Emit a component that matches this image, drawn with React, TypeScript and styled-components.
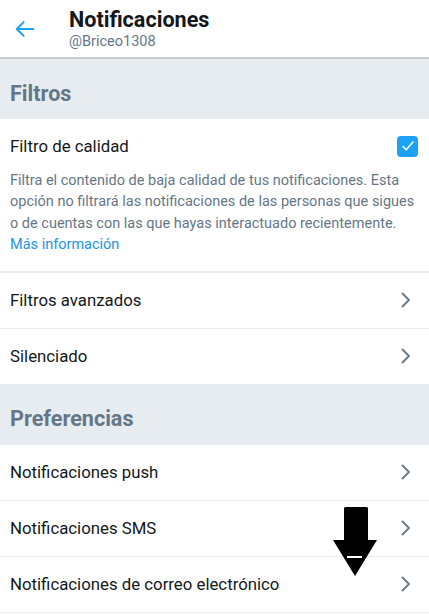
import React from "react";
import styled, { createGlobalStyle } from "styled-components";

const GlobalStyle = createGlobalStyle`
  html, body {
    margin: 0;
    padding: 0;
    background: #ffffff;
  }
  body {
    font-family: Roboto, "Noto Sans", "Liberation Sans", sans-serif;
    color: #14171a;
  }
`;

const filterRows = ["Filtros avanzados", "Silenciado"];
const prefRows = [
  "Notificaciones push",
  "Notificaciones SMS",
  "Notificaciones de correo electrónico",
];

const descLines = [
  "Filtra el contenido de baja calidad de tus notificaciones. Esta",
  "opción no filtrará las notificaciones de las personas que sigues",
  "o de cuentas con las que hayas interactuado recientemente.",
];

const BackArrow = () => (
  <svg width="22" height="22" viewBox="0 0 24 24" fill="none">
    <path
      d="M21 12H3.5M10.5 4.5L3 12l7.5 7.5"
      stroke="#1da1f2"
      strokeWidth="2.2"
      strokeLinecap="round"
      strokeLinejoin="round"
    />
  </svg>
);

const Chevron = () => (
  <svg width="10" height="16" viewBox="0 0 10 16" fill="none">
    <path
      d="M1.5 1.5L8 8l-6.5 6.5"
      stroke="#657786"
      strokeWidth="1.8"
      strokeLinecap="round"
      strokeLinejoin="round"
    />
  </svg>
);

const CheckBox = () => (
  <CheckSquare>
    <svg width="14" height="14" viewBox="0 0 14 14" fill="none">
      <path
        d="M2 7.5l3.2 3.3L12 3"
        stroke="#ffffff"
        strokeWidth="1.6"
        strokeLinecap="round"
        strokeLinejoin="round"
      />
    </svg>
  </CheckSquare>
);

const DownArrow = () => (
  <ArrowOverlay>
    <svg width="46" height="70" viewBox="0 0 46 70">
      <path
        d="M12 2.5Q12 1 13.5 1h21Q36 1 36 2.5V34h9L23 70 1 34h11z"
        fill="#000000"
      />
      <rect x="15" y="50" width="15" height="2" fill="#ffffff" />
    </svg>
  </ArrowOverlay>
);

const App = () => {
  return (
    <Page>
      <GlobalStyle />
      <TopBar>
        <BackButton>
          <BackArrow />
        </BackButton>
        <TitleBlock>
          <Title>Notificaciones</Title>
          <Handle>@Briceo1308</Handle>
        </TitleBlock>
      </TopBar>

      <SectionHeader>Filtros</SectionHeader>
      <QualityBlock>
        <QualityTop>
          <RowLabel>Filtro de calidad</RowLabel>
          <CheckBox />
        </QualityTop>
        <Description>
          {descLines.map((line) => (
            <DescLine key={line}>{line}</DescLine>
          ))}
          <MoreLink>Más información</MoreLink>
        </Description>
      </QualityBlock>
      {filterRows.map((label) => (
        <Row key={label}>
          <RowLabel>{label}</RowLabel>
          <Chevron />
        </Row>
      ))}

      <SectionHeader>Preferencias</SectionHeader>
      {prefRows.map((label) => (
        <Row key={label}>
          <RowLabel>{label}</RowLabel>
          <Chevron />
        </Row>
      ))}

      <DownArrow />
    </Page>
  );
};

const Page = styled.div`
  position: relative;
  width: 429px;
  min-height: 615px;
  background: #ffffff;
  overflow: hidden;
`;

const TopBar = styled.header`
  height: 57px;
  display: flex;
  align-items: center;
  border-bottom: 2px solid #c9cdd0;
`;

const BackButton = styled.div`
  width: 69px;
  padding-left: 14px;
  box-sizing: border-box;
  display: flex;
  align-items: center;
`;

const TitleBlock = styled.div`
  display: flex;
  flex-direction: column;
`;

const Title = styled.h1`
  margin: 0;
  font-size: 21.6px;
  line-height: 26px;
  font-weight: 700;
  color: #14171a;
`;

const Handle = styled.span`
  font-size: 14.5px;
  line-height: 18px;
  color: #657786;
`;

const SectionHeader = styled.h2`
  margin: 0;
  height: 60px;
  box-sizing: border-box;
  display: flex;
  align-items: center;
  padding: 8px 10px 0;
  background: #e6ecf0;
  font-size: 21.6px;
  font-weight: 700;
  color: #657786;
`;

const QualityBlock = styled.div`
  padding: 16px 11px 15px 10px;
  border-bottom: 2px solid #e6ecf0;
`;

const QualityTop = styled.div`
  display: flex;
  align-items: center;
  justify-content: space-between;
  height: 22px;
  margin-bottom: 13px;
`;

const CheckSquare = styled.div`
  width: 21px;
  height: 21px;
  border-radius: 4px;
  background: #1da1f2;
  display: flex;
  align-items: center;
  justify-content: center;
`;

const Description = styled.div`
  font-size: 14.5px;
  line-height: 21.4px;
  color: #657786;
`;

const DescLine = styled.div`
  white-space: nowrap;
`;

const MoreLink = styled.div`
  color: #1b95e0;
`;

const Row = styled.div`
  height: 55px;
  display: flex;
  align-items: center;
  justify-content: space-between;
  padding: 0 18px 0 10px;
  border-bottom: 1px solid #e6ecf0;
`;

const RowLabel = styled.span`
  font-size: 16.8px;
  color: #14171a;
`;

const ArrowOverlay = styled.div`
  position: absolute;
  left: 332px;
  top: 506px;
  width: 46px;
  height: 70px;
`;

export default App;
